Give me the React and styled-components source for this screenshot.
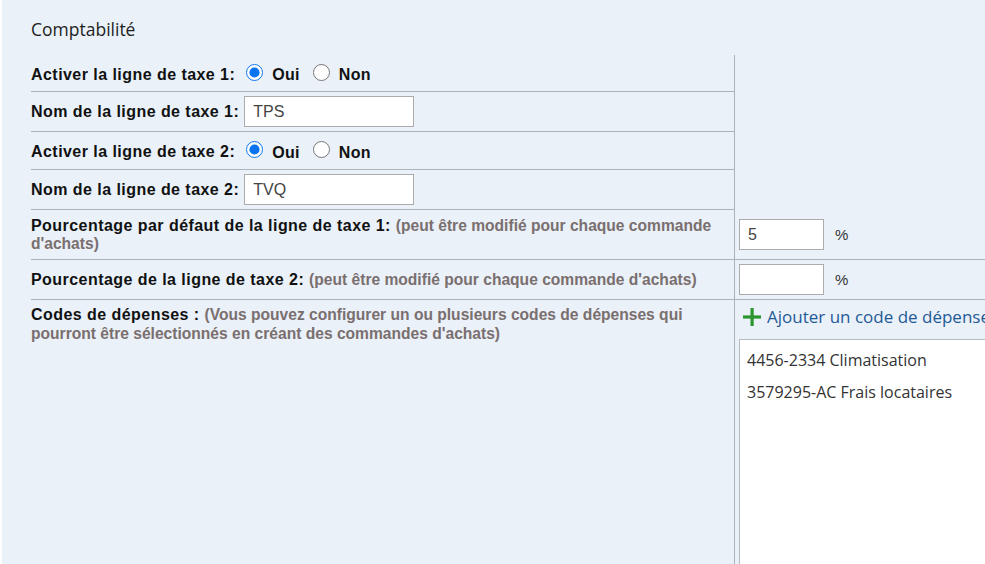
import React from 'react';
import styled, { createGlobalStyle } from 'styled-components';

const GlobalStyle = createGlobalStyle`
  html, body {
    margin: 0;
    padding: 0;
    overflow: hidden;
    background: #ffffff;
  }
  body {
    font-family: "Liberation Sans", Arial, sans-serif;
  }
`;

const Page = styled.div`
  margin-left: 2px;
  width: 1150px;
  height: 564px;
  background: #eaf1f9;
  padding: 19px 0 0 29px;
  box-sizing: border-box;
  overflow: hidden;
`;

const Title = styled.h2`
  margin: 0 0 16px;
  font-family: "Open Sans", "Noto Sans", sans-serif;
  font-size: 17.5px;
  font-weight: 400;
  line-height: 20px;
  color: #1e1e1e;
`;

const Table = styled.div`
  display: grid;
  grid-template-columns: 703px 1fr;
`;

const LeftStack = styled.div`
  display: flex;
  flex-direction: column;
`;

const Cell = styled.div`
  border-bottom: ${(p) => (p.$noLine ? 'none' : '1px solid #adb3bb')};
  border-left: ${(p) => (p.$right ? '1px solid #adb3bb' : 'none')};
  padding: ${(p) => (p.$right ? '0 0 0 4px' : '0')};
  display: flex;
  align-items: ${(p) => (p.$top ? 'flex-start' : 'center')};
  flex-direction: ${(p) => (p.$column ? 'column' : 'row')};
  box-sizing: border-box;
  min-height: ${(p) => p.$h || 40}px;
`;

const Label = styled.span`
  font-size: 16px;
  letter-spacing: 0.45px;
  font-weight: bold;
  color: #111;
  line-height: 18.5px;
  white-space: ${(p) => (p.$wrap ? 'normal' : 'nowrap')};
  padding: ${(p) => (p.$wrap ? '6px 8px 5px 0' : p.$radio ? '4px 0 0' : '2px 0 0')};
`;

const Note = styled.span`
  font-size: 15.6px;
  letter-spacing: 0;
  color: #7a6f6f;
`;

const TextInput = styled.input`
  width: ${(p) => p.$w || 170}px;
  height: 31px;
  box-sizing: border-box;
  border: 1px solid #acacac;
  background: #fff;
  padding: 0 8px;
  font-family: "Liberation Sans", Arial, sans-serif;
  font-size: 16px;
  color: #444;
  margin-left: ${(p) => p.$ml || 0}px;
  outline: none;
`;

const RadioLabel = styled.label`
  display: inline-flex;
  align-items: center;
  font-size: 16px;
  letter-spacing: 0.3px;
  font-weight: bold;
  color: #111;
  margin-left: ${(p) => p.$ml || 0}px;
  padding-top: 4px;
`;

const Radio = styled.input.attrs({ type: 'radio' })`
  width: 17px;
  height: 17px;
  margin: 0 9px 6px 0;
  accent-color: #0a74f0;
`;

const Percent = styled.span`
  font-size: 15px;
  color: #333;
  margin-left: 11px;
`;

const AddLink = styled.a`
  display: inline-flex;
  align-items: center;
  gap: 5px;
  margin: 6px 0 0 3px;
  font-family: "Open Sans", "Noto Sans", sans-serif;
  font-size: 17px;
  color: #1f5a96;
  text-decoration: none;
  white-space: nowrap;
  cursor: pointer;
  line-height: 22px;
`;

const CodeList = styled.ul`
  list-style: none;
  margin: 11px 0 0;
  padding: 4px 7px;
  width: 320px;
  height: 260px;
  box-sizing: border-box;
  background: #fff;
  border: 1px solid #b8bcc2;
  font-family: "Open Sans", "Noto Sans", sans-serif;
  font-size: 16px;
  color: #333;
`;

const CodeItem = styled.li`
  line-height: 32px;
  white-space: nowrap;
`;

const PlusIcon = () => (
  <svg width="20" height="20" viewBox="0 0 20 20" aria-hidden="true">
    <rect x="8.5" y="1" width="3.2" height="18" fill="#2b962d" />
    <rect x="1" y="8.4" width="18" height="3.2" fill="#2b962d" />
  </svg>
);

const codes = ['4456-2334 Climatisation', '3579295-AC Frais locataires'];

const TaxToggle = ({ n }) => (
  <Cell $h={n === 1 ? 37 : 38}>
    <Label $radio>Activer la ligne de taxe {n}:</Label>
    <RadioLabel $ml={11}>
      <Radio name={`t${n}`} defaultChecked />
      Oui
    </RadioLabel>
    <RadioLabel $ml={13}>
      <Radio name={`t${n}`} />
      Non
    </RadioLabel>
  </Cell>
);

const TaxName = ({ n, value }) => (
  <Cell $h={40}>
    <Label>Nom de la ligne de taxe {n}:</Label>
    <TextInput $ml={5} defaultValue={value} />
  </Cell>
);

export default function App() {
  return (
    <>
      <GlobalStyle />
      <Page>
        <Title>Comptabilité</Title>
        <Table>
          <LeftStack>
            <TaxToggle n={1} />
            <TaxName n={1} value="TPS" />
            <TaxToggle n={2} />
            <TaxName n={2} value="TVQ" />
          </LeftStack>
          <Cell $right $noLine />

          <Cell $h={50}>
            <Label $wrap>
              Pourcentage par défaut de la ligne de taxe 1:{' '}
              <Note>(peut être modifié pour chaque commande d'achats)</Note>
            </Label>
          </Cell>
          <Cell $right $h={50}>
            <TextInput $w={85} defaultValue="5" />
            <Percent>%</Percent>
          </Cell>

          <Cell $h={40}>
            <Label $wrap>
              Pourcentage de la ligne de taxe 2:{' '}
              <Note>(peut être modifié pour chaque commande d'achats)</Note>
            </Label>
          </Cell>
          <Cell $right $h={40}>
            <TextInput $w={85} defaultValue="" />
            <Percent>%</Percent>
          </Cell>

          <Cell $top $noLine $h={264}>
            <Label $wrap>
              Codes de dépenses :{' '}
              <Note>
                (Vous pouvez configurer un ou plusieurs codes de dépenses qui pourront être
                sélectionnés en créant des commandes d'achats)
              </Note>
            </Label>
          </Cell>
          <Cell $right $top $column $noLine $h={264}>
            <AddLink>
              <PlusIcon />
              Ajouter un code de dépense
            </AddLink>
            <CodeList>
              {codes.map((c) => (
                <CodeItem key={c}>{c}</CodeItem>
              ))}
            </CodeList>
          </Cell>
        </Table>
      </Page>
    </>
  );
}
